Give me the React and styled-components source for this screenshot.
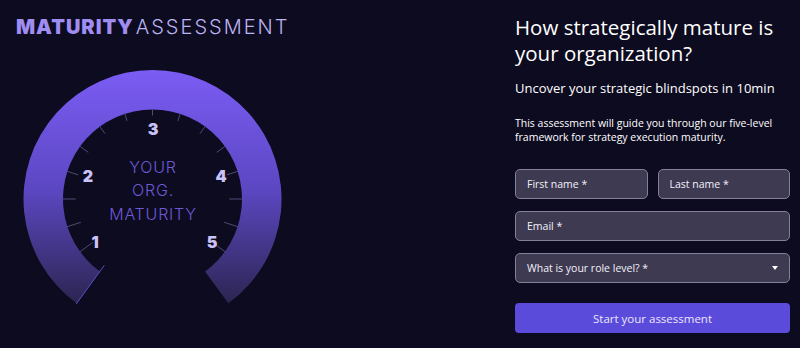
import React from "react";
import styled, { createGlobalStyle } from "styled-components";

const Global = createGlobalStyle`
  html, body { margin: 0; padding: 0; background: #0d0b1f; }
  body { font-family: "Open Sans", sans-serif; }
  * { box-sizing: border-box; }
`;

const Page = styled.div`
  width: 800px;
  height: 348px;
  display: flex;
  background: #0d0b1f;
  overflow: hidden;
`;

const Left = styled.section`
  width: 500px;
  display: flex;
  flex-direction: column;
  padding-top: 15px;
`;

const Logo = styled.h1`
  margin: 0 0 0 16px;
  font-family: Inter, sans-serif;
  font-size: 20px;
  line-height: 24px;
  display: flex;
`;

const LogoBold = styled.span`
  font-weight: 900;
  color: #9f8df2;
  letter-spacing: 1px;
`;

const LogoLight = styled.span`
  font-weight: 300;
  color: #bcb3f2;
  letter-spacing: 2px;
  margin-left: 2px;
`;

const GaugeSvg = styled.svg`
  display: block;
  margin: 23px 0 0 12px;
`;

const Right = styled.section`
  width: 275px;
  margin-left: 15px;
  display: flex;
  flex-direction: column;
  padding-top: 14px;
`;

const Heading = styled.h2`
  margin: 0;
  font-family: "Open Sans", sans-serif;
  font-weight: 400;
  font-size: 20.5px;
  line-height: 26px;
  color: #ffffff;
`;

const Sub = styled.p`
  margin: 13px 0 0;
  font-size: 13px;
  font-weight: 500;
  line-height: 18px;
  color: #ffffff;
`;

const Intro = styled.p`
  margin: 19px 0 0;
  font-size: 10.5px;
  line-height: 14px;
  color: #ffffff;
`;

const Form = styled.form`
  margin-top: 25px;
  display: flex;
  flex-direction: column;
  gap: 12px;
`;

const Row = styled.div`
  display: grid;
  grid-template-columns: 1fr 1fr;
  gap: 10px;
`;

const Field = styled.div`
  height: 30px;
  border: 1px solid #85809a;
  border-radius: 5px;
  background: #3e3a52;
  display: flex;
  align-items: center;
  justify-content: space-between;
  padding: 0 11px 0 11px;
  color: #f3f1fa;
  font-size: 10.5px;
  font-weight: 500;
`;

const Caret = styled.span`
  width: 0;
  height: 0;
  border-left: 3.5px solid transparent;
  border-right: 3.5px solid transparent;
  border-top: 4px solid #ffffff;
`;

const Button = styled.button`
  margin-top: 8px;
  height: 30px;
  border: 0;
  border-radius: 4px;
  background: #5b4bdb;
  color: #ebe7fc;
  font-family: "Open Sans", sans-serif;
  font-size: 11.5px;
  cursor: pointer;
`;

const CX = 152.5;
const CY = 199;
const RO = 129;
const RI = 89.5;

const pt = (r, deg) => {
  const a = (deg * Math.PI) / 180;
  return [CX + r * Math.sin(a), CY - r * Math.cos(a)];
};

function Gauge() {
  const o1 = pt(RO, -144);
  const o2 = pt(RO, 144);
  const i2 = pt(RI, 144);
  const i1 = pt(RI, -144);
  const ring = `M ${o1[0]} ${o1[1]} A ${RO} ${RO} 0 1 1 ${o2[0]} ${o2[1]} L ${i2[0]} ${i2[1]} A ${RI} ${RI} 0 1 0 ${i1[0]} ${i1[1]} Z`;
  const ticks = [];
  for (let d = -126; d <= 126; d += 18) {
    const len = 6 + 0.075 * Math.abs(d);
    const a = pt(RI + 0.5, d);
    const b = pt(RI - len, d);
    ticks.push(
      <line key={d} x1={a[0]} y1={a[1]} x2={b[0]} y2={b[1]} stroke="#4f4a78" strokeWidth="1" />
    );
  }
  const e1 = pt(RO + 1, -144);
  const e2 = pt(82, -144);
  const nums = [
    ["3", 153, 129],
    ["2", 88, 176],
    ["4", 221, 176],
    ["1", 95, 242],
    ["5", 212, 242],
  ];
  return (
    <GaugeSvg width="280" height="260" viewBox="12 62 280 260">
      <defs>
        <linearGradient id="ringGrad" gradientUnits="userSpaceOnUse" x1="0" y1="70" x2="0" y2="310">
          <stop offset="0" stopColor="#7b5cf4" />
          <stop offset="0.5" stopColor="#5c47c2" />
          <stop offset="1" stopColor="#29234a" />
        </linearGradient>
      </defs>
      <path d={ring} fill="url(#ringGrad)" />
      {ticks}
      <line x1={e1[0]} y1={e1[1]} x2={e2[0]} y2={e2[1]} stroke="#5a4dc4" strokeWidth="1" />
      {nums.map(([n, x, y]) => (
        <text
          key={n}
          x={x}
          y={y}
          textAnchor="middle"
          dominantBaseline="central"
          fill="#cbc3f7"
          fontFamily="Inter, sans-serif"
          fontWeight="900"
          fontSize="16"
        >
          {n}
        </text>
      ))}
      {[["YOUR", 167], ["ORG.", 190], ["MATURITY", 214]].map(([t, y]) => (
        <text
          key={t}
          x="153"
          y={y}
          textAnchor="middle"
          dominantBaseline="central"
          fill="#6d59d8"
          fontFamily="Inter, sans-serif"
          fontWeight="300"
          fontSize="16"
          letterSpacing="0.8"
        >
          {t}
        </text>
      ))}
    </GaugeSvg>
  );
}

export default function App() {
  return (
    <>
      <Global />
      <Page>
        <Left>
          <Logo>
            <LogoBold>MATURITY</LogoBold>
            <LogoLight>ASSESSMENT</LogoLight>
          </Logo>
          <Gauge />
        </Left>
        <Right>
          <Heading>How strategically mature is your organization?</Heading>
          <Sub>Uncover your strategic blindspots in 10min</Sub>
          <Intro>
            This assessment will guide you through our five-level framework for strategy execution maturity.
          </Intro>
          <Form onSubmit={(e) => e.preventDefault()}>
            <Row>
              <Field>First name *</Field>
              <Field>Last name *</Field>
            </Row>
            <Field>Email *</Field>
            <Field>
              What is your role level? *
              <Caret />
            </Field>
            <Button type="submit">Start your assessment</Button>
          </Form>
        </Right>
      </Page>
    </>
  );
}
